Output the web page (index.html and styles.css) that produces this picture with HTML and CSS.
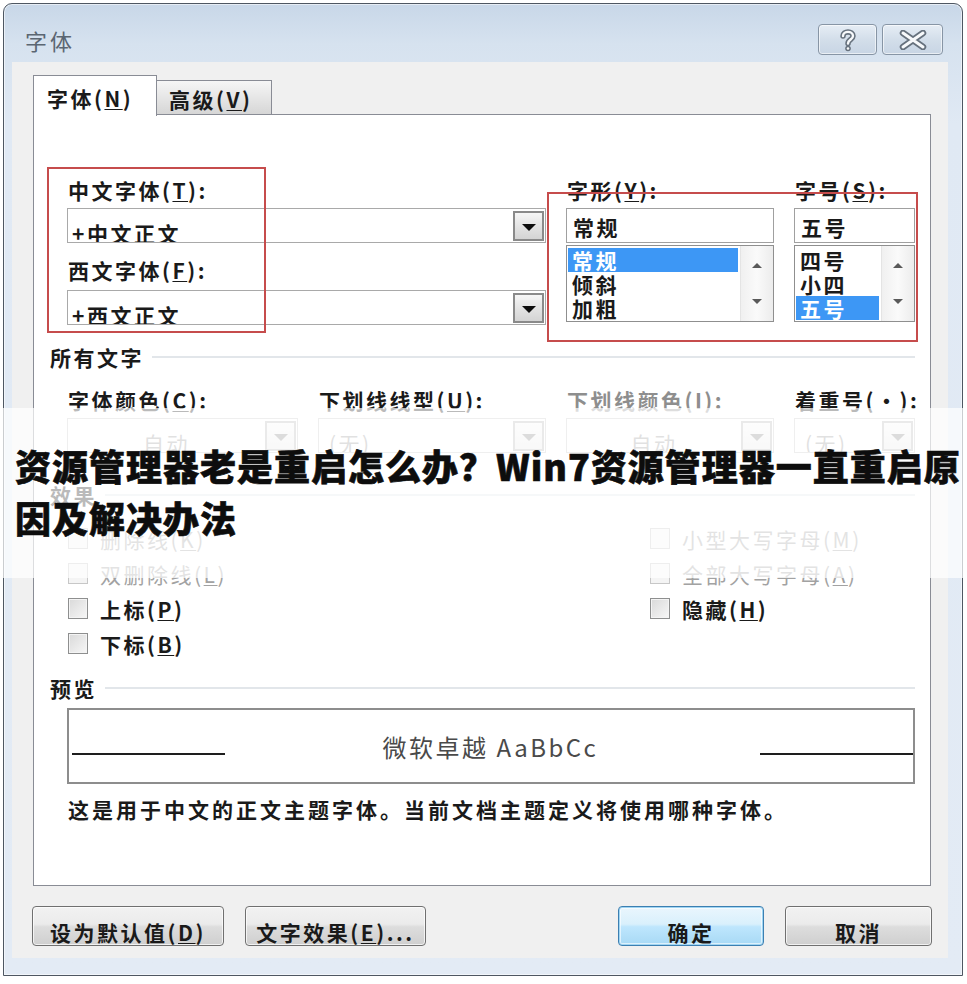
FILE: index.html
```html
<!DOCTYPE html>
<html lang="zh-CN">
<head>
<meta charset="utf-8">
<title>字体</title>
<link rel="stylesheet" href="styles.css">
</head>
<body>
<div class="window">
  <div class="titlebar">
    <div class="title">字体</div>
    <div class="caption-btns">
      <div class="cap-btn help">
        <svg width="18" height="24" viewBox="0 0 18 24">
          <path d="M4 8 C4 2.5 14 2.5 14 8 C14 11.5 9 11.5 9 15.5" fill="none" stroke="#66717d" stroke-width="5.5" stroke-linecap="round"/>
          <path d="M4 8 C4 2.5 14 2.5 14 8 C14 11.5 9 11.5 9 15.5" fill="none" stroke="#f7f9fb" stroke-width="2.4" stroke-linecap="round"/>
          <circle cx="9" cy="20.5" r="2.8" fill="#66717d"/>
          <circle cx="9" cy="20.5" r="1.3" fill="#f7f9fb"/>
        </svg>
      </div>
      <div class="cap-btn close">
        <svg width="28" height="20" viewBox="0 0 28 20">
          <path d="M4 3 L24 17 M4 17 L24 3" fill="none" stroke="#66717d" stroke-width="6.5" stroke-linecap="round"/>
          <path d="M4 3 L24 17 M4 17 L24 3" fill="none" stroke="#f7f9fb" stroke-width="3" stroke-linecap="round"/>
        </svg>
      </div>
    </div>
  </div>

  <div class="client">
    <div class="tabs">
      <div class="tab active">字体(<u>N</u>)</div>
      <div class="tab inactive">高级(<u>V</u>)</div>
    </div>

    <div class="panel">
      <div class="redbox redbox-fonts"></div>
      <div class="redbox redbox-style"></div>

      <div class="grid top">
        <div class="col-font">
          <div class="lbl">中文字体(<u>T</u>):</div>
          <div class="combo">
            <span class="combo-text">+中文正文</span>
            <span class="drop"><span class="tri"></span></span>
          </div>
          <div class="lbl lbl-second">西文字体(<u>F</u>):</div>
          <div class="combo combo-second">
            <span class="combo-text">+西文正文</span>
            <span class="drop"><span class="tri"></span></span>
          </div>
        </div>
        <div class="col-list">
          <div class="lbl">字形(<u>Y</u>):</div>
          <div class="edit">常规</div>
          <div class="list">
            <div class="items items-style">
              <div class="item sel">常规</div>
              <div class="item">倾斜</div>
              <div class="item">加粗</div>
            </div>
            <div class="vscroll"><span class="arr up"></span><span class="arr down"></span></div>
          </div>
        </div>
        <div class="col-list">
          <div class="lbl">字号(<u>S</u>):</div>
          <div class="edit edit-open">五号</div>
          <div class="list list-open">
            <div class="items">
              <div class="item">四号</div>
              <div class="item">小四</div>
              <div class="item sel">五号</div>
            </div>
            <div class="vscroll"><span class="arr up"></span><span class="arr down"></span></div>
          </div>
        </div>
      </div>

      <div class="sect sect-all"><span>所有文字</span></div>

      <div class="grid row2">
        <div>
          <div class="lbl">字体颜色(<u>C</u>):</div>
          <div class="combo dis"><span class="combo-text center">自动</span><span class="drop"><span class="tri"></span></span></div>
        </div>
        <div>
          <div class="lbl">下划线线型(<u>U</u>):</div>
          <div class="combo dis"><span class="combo-text pad">(无)</span><span class="drop"><span class="tri"></span></span></div>
        </div>
        <div>
          <div class="lbl lbl-dis">下划线颜色(I):</div>
          <div class="combo dis"><span class="combo-text center">自动</span><span class="drop"><span class="tri"></span></span></div>
        </div>
        <div>
          <div class="lbl">着重号(·):</div>
          <div class="combo dis"><span class="combo-text pad">(无)</span><span class="drop"><span class="tri"></span></span></div>
        </div>
      </div>

      <div class="sect sect-effects"><span>效果</span></div>

      <div class="checks">
        <div class="chk dis"><span class="box"></span><span class="ctext">删除线(<u>K</u>)</span></div>
        <div class="chk dis"><span class="box"></span><span class="ctext">小型大写字母(<u>M</u>)</span></div>
        <div class="chk dis"><span class="box"></span><span class="ctext">双删除线(<u>L</u>)</span></div>
        <div class="chk dis"><span class="box"></span><span class="ctext">全部大写字母(<u>A</u>)</span></div>
        <div class="chk"><span class="box"></span><span class="ctext">上标(<u>P</u>)</span></div>
        <div class="chk"><span class="box"></span><span class="ctext">隐藏(<u>H</u>)</span></div>
        <div class="chk"><span class="box"></span><span class="ctext">下标(<u>B</u>)</span></div>
      </div>

      <div class="sect sect-preview"><span>预览</span></div>

      <div class="preview">
        <span class="pline"></span>
        <span class="ptext">微软卓越 AaBbCc</span>
        <span class="pline"></span>
      </div>

      <div class="desc">这是用于中文的正文主题字体。当前文档主题定义将使用哪种字体。</div>
    </div>

    <div class="btnrow">
      <div class="btn w1">设为默认值(<u>D</u>)</div>
      <div class="btn w2">文字效果(<u>E</u>)...</div>
      <div class="spacer"></div>
      <div class="btn w3 default">确定</div>
      <div class="btn w4">取消</div>
    </div>
  </div>
</div>

<div class="band">资源管理器老是重启怎么办？Win7资源管理器一直重启原因及解决办法</div>
</body>
</html>
```

FILE: styles.css
```css
* { box-sizing: border-box; }

html, body { margin: 0; padding: 0; }

body {
  width: 967px;
  height: 984px;
  overflow: hidden;
  position: relative;
  background: #ffffff;
  font-family: "Noto Sans CJK SC", "Microsoft YaHei", sans-serif;
  color: #1a1a1a;
}

u { text-decoration: underline; text-decoration-thickness: 1px; text-underline-offset: 2px; }

/* ---------- window frame ---------- */
.window {
  margin: 3px 4px 0 3px;
  height: 973px;
  border: 1px solid #4e5762;
  border-radius: 9px 9px 0 0;
  background: linear-gradient(#c8d7e8 0px, #d6e2ef 40px, #e0e9f4 120px, #e3ebf5 100%);
  box-shadow: inset 0 0 0 1px rgba(255, 255, 255, 0.55);
  display: flex;
  flex-direction: column;
}

.titlebar {
  height: 58px;
  flex: 0 0 58px;
  display: flex;
  justify-content: space-between;
  align-items: flex-start;
  padding: 0 19px 0 21px;
}

.title {
  margin-top: 22px;
  font-size: 22px;
  line-height: 28px;
  letter-spacing: 3px;
  color: #5b6672;
}

.caption-btns {
  margin-top: 20px;
  display: flex;
  gap: 5px;
}

.cap-btn {
  height: 31px;
  border: 1px solid #8795a5;
  border-radius: 4px;
  background: linear-gradient(#e6edf5, #d3deea 50%, #c8d5e4);
  box-shadow: inset 0 0 0 1px rgba(255, 255, 255, 0.6);
  display: flex;
  align-items: center;
  justify-content: center;
}
.cap-btn.help { width: 59px; }
.cap-btn.close { width: 61px; }

/* ---------- client area ---------- */
.client {
  margin: 0 14px 0 8px;
  height: 896px;
  background: #f0f0f0;
  padding: 13px 17px 0 21px;
  display: flex;
  flex-direction: column;
}

.tabs {
  display: flex;
  align-items: flex-end;
  height: 41px;
  margin-bottom: -2px;
  position: relative;
  z-index: 2;
}

.tab {
  font-size: 21px;
  font-weight: 700;
  letter-spacing: 2.5px;
  line-height: 28px;
  white-space: nowrap;
}

.tab.active {
  width: 124px;
  height: 41px;
  background: #ffffff;
  border: 1px solid #898c95;
  border-bottom: none;
  padding: 8px 0 0 13px;
}

.tab.inactive {
  width: 115px;
  height: 34px;
  margin-bottom: 2px;
  border: 1px solid #898c95;
  border-left: none;
  border-bottom: none;
  background: linear-gradient(#f6f6f6, #e6e6e6 50%, #d6d6d6);
  padding: 4px 0 0 12px;
}

.panel {
  position: relative;
  height: 772px;
  flex: 0 0 772px;
  background: #ffffff;
  border: 1px solid #898c95;
  padding: 0 15px 0 34px;
}

/* annotations */
.redbox {
  position: absolute;
  border: 2px solid #c64c4c;
  z-index: 3;
  pointer-events: none;
}
.redbox-fonts { left: 13px; top: 52px; width: 219px; height: 166px; }
.redbox-style { left: 513px; top: 77px; width: 371px; height: 150px; }

/* ---------- shared controls ---------- */
.grid {
  display: grid;
  grid-template-columns: 230px 227px 207px 120px;
  column-gap: 21px;
}

.lbl {
  height: 28px;
  line-height: 28px;
  font-size: 21px;
  font-weight: 700;
  letter-spacing: 2.5px;
  white-space: nowrap;
}
.lbl-dis { color: #8e8e8e; }

.combo {
  margin-top: 4px;
  margin-left: -1px;
  height: 35px;
  border: 1px solid #a9a9a9;
  background: #ffffff;
  display: flex;
  overflow: hidden;
}

.combo-text {
  flex: 1;
  padding: 10px 0 0 4px;
  line-height: 28px;
  font-size: 21px;
  font-weight: 700;
  letter-spacing: 2.5px;
  white-space: nowrap;
  overflow: hidden;
}

.drop {
  width: 31px;
  height: 30px;
  margin: 2px 1px 0 0;
  border: 2px solid #8a8a8a;
  background: linear-gradient(#f6f6f6, #e4e4e4 50%, #d4d4d4);
  display: flex;
  align-items: center;
  justify-content: center;
}

.tri {
  width: 0;
  height: 0;
  border-left: 7px solid transparent;
  border-right: 7px solid transparent;
  border-top: 7px solid #0e0e0e;
  margin-top: 2px;
}

.col-font { grid-column: 1 / 3; }
.lbl-second { margin-top: 13px; }
.combo-second { margin-top: 6px; }

.top { margin-top: 61px; }

.edit {
  margin-top: 4px;
  margin-left: -1px;
  height: 35px;
  border: 1px solid #a0a0a0;
  padding: 3px 0 0 6px;
  line-height: 30px;
  font-size: 21px;
  font-weight: 700;
  letter-spacing: 2.5px;
  overflow: hidden;
}

.list {
  margin-top: 2px;
  margin-left: -1px;
  height: 77px;
  border: 1px solid #8f8f8f;
  display: flex;
  overflow: hidden;
}

.items {
  flex: 1;
  padding: 2px 2px 0 1px;
  overflow: hidden;
}

.item {
  height: 24px;
  line-height: 24px;
  padding-left: 4px;
  font-size: 21px;
  font-weight: 700;
  letter-spacing: 2.5px;
  white-space: nowrap;
  overflow: hidden;
}
.item.sel { background: #3d97f5; color: #ffffff; }

.vscroll {
  width: 33px;
  background: linear-gradient(90deg, #f0f0f0, #fafafa 50%, #ececec);
  border-left: 1px solid #e4e4e4;
  display: flex;
  flex-direction: column;
  justify-content: space-between;
  align-items: center;
  padding: 17px 0 17px;
}

.arr { width: 0; height: 0; border-left: 5px solid transparent; border-right: 5px solid transparent; }
.arr.up { border-bottom: 5px solid #5a5a5a; }
.arr.down { border-top: 5px solid #5a5a5a; }

/* ---------- section headers ---------- */
.sect {
  margin-left: -18px;
  height: 28px;
  display: flex;
  align-items: center;
  font-size: 21px;
  font-weight: 700;
  letter-spacing: 2.5px;
  white-space: nowrap;
}
.sect::after {
  content: "";
  flex: 1;
  height: 2px;
  margin-left: 8px;
  background: #e2e6ea;
}
.sect-all { margin-top: 18px; }
.sect-effects { margin-top: 28px; }
.sect-preview { margin-top: 13px; }

/* ---------- row 2 ---------- */
.row2 { margin-top: 15px; }

.combo.dis { border-color: #c9c9c9; }
.combo.dis .combo-text { color: #9a9a9a; font-weight: 400; }
.combo.dis .combo-text.center { text-align: center; padding-left: 0; }
.combo.dis .combo-text.pad { padding-left: 10px; }
.combo.dis .drop { border-color: #b9b9b9; background: linear-gradient(#f7f7f7, #e9e9e9); }
.combo.dis .tri { border-top-color: #8a8a8a; }

/* ---------- checkboxes ---------- */
.checks {
  margin-top: 12px;
  display: grid;
  grid-template-columns: 582px 1fr;
  grid-auto-rows: 35px;
}

.chk {
  display: flex;
  align-items: center;
  gap: 12px;
  font-size: 21px;
  font-weight: 700;
  letter-spacing: 2.5px;
  white-space: nowrap;
}

.box {
  flex: 0 0 auto;
  width: 20px;
  height: 21px;
  border: 1px solid #8e8f8f;
  background: linear-gradient(135deg, #d9d9d9, #f7f7f7);
  box-shadow: inset 0 0 0 1px #f4f4f4;
}

.chk.dis { color: #a2a2a2; font-weight: 400; }
.chk.dis .box { border-color: #c7c7c7; background: #f4f4f4; }

/* ---------- preview ---------- */
.preview {
  margin-top: 6px;
  margin-left: -1px;
  height: 76px;
  border: 2px solid #8d8d8d;
  display: grid;
  grid-template-columns: 153px 1fr 153px;
  align-items: center;
  padding: 0 0 0 3px;
}

.pline {
  height: 2px;
  background: #1e1e1e;
  margin-top: 16px;
}

.ptext {
  text-align: center;
  font-size: 24px;
  letter-spacing: 2.5px;
  color: #4a4a4a;
  white-space: nowrap;
  margin-right: 4px;
}

.desc {
  margin-top: 11px;
  height: 28px;
  line-height: 28px;
  font-size: 21px;
  font-weight: 700;
  letter-spacing: 3px;
  white-space: nowrap;
}

/* ---------- buttons ---------- */
.btnrow {
  margin: 20px -1px 0 -1px;
  display: flex;
  gap: 21px;
  height: 40px;
}

.spacer { flex: 1; }

.btn {
  height: 40px;
  border: 1px solid #707070;
  border-radius: 4px;
  background: linear-gradient(#f2f2f2 0%, #ebebeb 45%, #dddddd 52%, #cfcfcf 100%);
  box-shadow: inset 0 0 0 1px rgba(255, 255, 255, 0.7);
  text-align: center;
  padding-top: 11px;
  line-height: 28px;
  font-size: 21px;
  font-weight: 700;
  letter-spacing: 2.5px;
  white-space: nowrap;
  overflow: hidden;
}
.btn.w1 { width: 192px; }
.btn.w2 { width: 181px; }
.btn.w3 { width: 146px; }
.btn.w4 { width: 147px; }

.btn.default {
  border-color: #3c7fb1;
  background: linear-gradient(#eaf6fd 0%, #d9f0fc 45%, #bee6fd 52%, #a7d9f5 100%);
  box-shadow: inset 0 0 0 1px #9fd5f3, inset 0 0 0 2px rgba(255, 255, 255, 0.6);
}

/* ---------- overlay title band ---------- */
.band {
  position: absolute;
  left: 0;
  top: 408px;
  width: 967px;
  height: 170px;
  background: rgba(255, 255, 255, 0.7);
  padding: 31px 0 0 15px;
  font-size: 36px;
  line-height: 52px;
  font-weight: 900;
  letter-spacing: 1px;
  color: #0d0d0d;
  -webkit-text-stroke: 0.6px #0d0d0d;
  z-index: 10;
}
```
